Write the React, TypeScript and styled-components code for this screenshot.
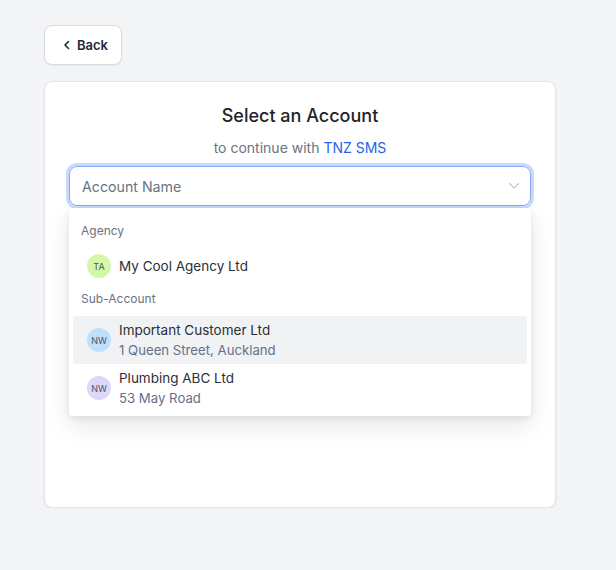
import React from "react";
import styled, { createGlobalStyle } from "styled-components";

const GlobalStyle = createGlobalStyle`
  html, body {
    margin: 0;
    padding: 0;
    background: #f3f4f6;
    font-family: Inter, "Noto Sans", Arial, sans-serif;
    color: #1f2937;
  }
`;

const Page = styled.div`
  width: 512px;
  padding: 25px 0 0 44px;
  display: flex;
  flex-direction: column;
  align-items: flex-start;
  gap: 16px;
`;

const BackButton = styled.button`
  display: flex;
  align-items: center;
  gap: 6px;
  height: 40px;
  width: 78px;
  padding: 0 0 0 18px;
  background: #ffffff;
  border: 1px solid #d8dbe0;
  border-radius: 8px;
  font-family: inherit;
  font-size: 13px;
  font-weight: 600;
  color: #1f2937;
  box-shadow: 0 1px 2px rgba(0, 0, 0, 0.05);
`;

const Card = styled.div`
  box-sizing: border-box;
  width: 512px;
  height: 427px;
  background: #ffffff;
  border: 1px solid #e3e5e9;
  border-radius: 8px;
  box-shadow: 0 1px 2px rgba(0, 0, 0, 0.08);
  padding: 20px 24px;
  display: flex;
  flex-direction: column;
  align-items: center;
`;

const Title = styled.h1`
  margin: 0;
  font-size: 18px;
  line-height: 28px;
  font-weight: 500;
  color: #1f2329;
`;

const Subtitle = styled.p`
  margin: 8px 0 8px;
  font-size: 14px;
  line-height: 20px;
  color: #6b7280;
`;

const Brand = styled.span`
  color: #2563eb;
`;

const SelectWrap = styled.div`
  position: relative;
  width: 100%;
`;

const Input = styled.div`
  box-sizing: border-box;
  height: 40px;
  width: 100%;
  display: flex;
  align-items: center;
  justify-content: space-between;
  padding: 0 10px 0 12px;
  border: 1px solid #86a8f3;
  border-radius: 8px;
  box-shadow: 0 0 0 3px #cbdafc;
  font-size: 14.2px;
  color: #6b7280;
`;

const Menu = styled.div`
  position: absolute;
  top: 42px;
  left: 0;
  right: 0;
  background: #ffffff;
  border-radius: 4px;
  padding: 8px 4px 4px;
  box-shadow: 0 10px 25px rgba(0, 0, 0, 0.1), 0 2px 6px rgba(0, 0, 0, 0.08);
`;

const GroupLabel = styled.div`
  padding: 6px 8px 8px;
  font-size: 12px;
  line-height: 18px;
  color: #6b7280;
`;

const Option = styled.div<{ $active?: boolean; $double?: boolean }>`
  display: flex;
  align-items: center;
  gap: 8px;
  padding: ${({ $double }) => ($double ? "4px 14px" : "6px 14px")};
  border-radius: 4px;
  background: ${({ $active }) => ($active ? "#f1f2f4" : "transparent")};
`;

const Avatar = styled.div<{ $bg: string }>`
  width: 24px;
  height: 24px;
  border-radius: 50%;
  background: ${({ $bg }) => $bg};
  display: flex;
  align-items: center;
  justify-content: center;
  font-size: 9px;
  color: #4b5563;
  flex-shrink: 0;
`;

const OptionText = styled.div`
  display: flex;
  flex-direction: column;
`;

const Name = styled.span`
  font-size: 13.5px;
  line-height: 20px;
  color: #2b2f36;
`;

const Address = styled.span`
  font-size: 13.2px;
  line-height: 20px;
  color: #64708a;
`;

type Account = {
  initials: string;
  color: string;
  name: string;
  address?: string;
  active?: boolean;
};

const agencies: Account[] = [
  { initials: "TA", color: "#d4f7aa", name: "My Cool Agency Ltd" },
];

const subAccounts: Account[] = [
  {
    initials: "NW",
    color: "#bfe0fd",
    name: "Important Customer Ltd",
    address: "1 Queen Street, Auckland",
    active: true,
  },
  {
    initials: "NW",
    color: "#ddd8fb",
    name: "Plumbing ABC Ltd",
    address: "53 May Road",
  },
];

function AccountOption({ account }: { account: Account }) {
  return (
    <Option $active={account.active} $double={!!account.address}>
      <Avatar $bg={account.color}>{account.initials}</Avatar>
      <OptionText>
        <Name>{account.name}</Name>
        {account.address && <Address>{account.address}</Address>}
      </OptionText>
    </Option>
  );
}

export default function App() {
  return (
    <>
      <GlobalStyle />
      <Page>
        <BackButton>
          <svg width="8" height="10" viewBox="0 0 8 10" fill="none">
            <path d="M5.5 1.5 2 5l3.5 3.5" stroke="#1f2937" strokeWidth="1.6" strokeLinecap="round" strokeLinejoin="round" />
          </svg>
          Back
        </BackButton>
        <Card>
          <Title>Select an Account</Title>
          <Subtitle>
            to continue with <Brand>TNZ SMS</Brand>
          </Subtitle>
          <SelectWrap>
            <Input>
              Account Name
              <svg width="12" height="8" viewBox="0 0 12 8" fill="none">
                <path d="M1.5 1.5 6 6l4.5-4.5" stroke="#c4c8cf" strokeWidth="1.2" strokeLinecap="round" strokeLinejoin="round" />
              </svg>
            </Input>
            <Menu>
              <GroupLabel>Agency</GroupLabel>
              {agencies.map((a) => (
                <AccountOption key={a.name} account={a} />
              ))}
              <GroupLabel>Sub-Account</GroupLabel>
              {subAccounts.map((a) => (
                <AccountOption key={a.name} account={a} />
              ))}
            </Menu>
          </SelectWrap>
        </Card>
      </Page>
    </>
  );
}
